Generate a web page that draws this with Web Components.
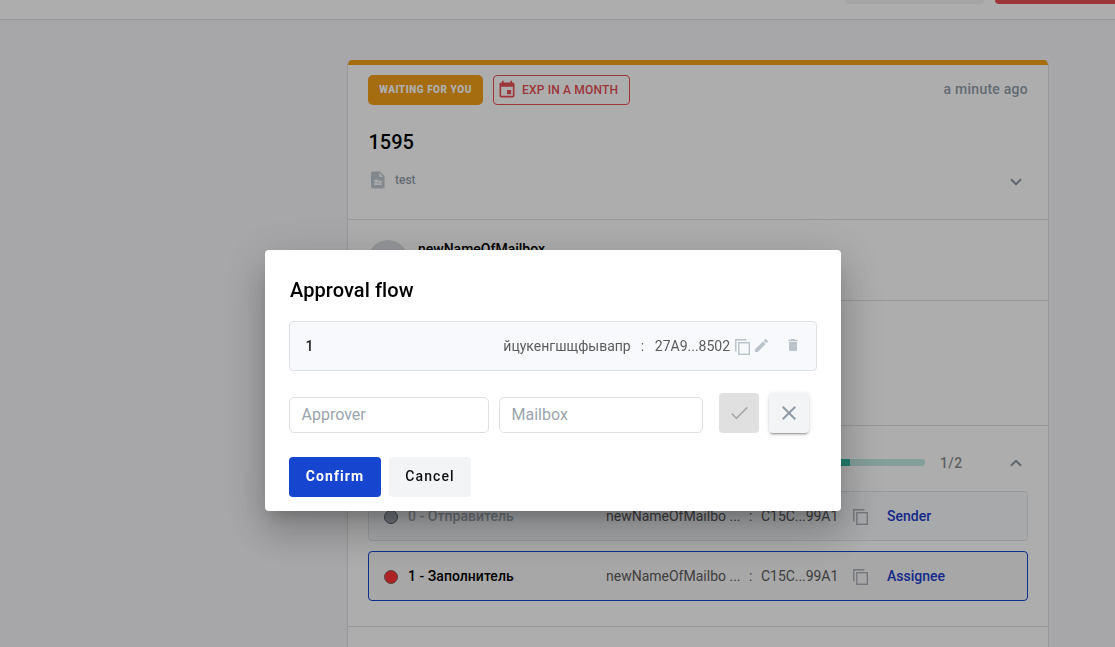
<!DOCTYPE html>
<html lang="en">
<head>
<meta charset="utf-8">
<title>Approval flow</title>
<style>
html,body{margin:0;height:100%;overflow:hidden;background:#f7f7fa}
body{font-family:Roboto,"Open Sans",sans-serif;font-size:14px;color:#000}
</style>
</head>
<body>
<mail-page></mail-page>
<script>
function define(name, html) {
  const t = document.createElement('template');
  t.innerHTML = html;
  customElements.define(name, class extends HTMLElement {
    constructor() {
      super();
      this.attachShadow({ mode: 'open' }).append(t.content.cloneNode(true));
    }
  });
}

const ICONS = {
  copy: [15, 16, '<path d="M.75 12.5V.75H11.5" fill="none" stroke="currentColor" stroke-width="1.4"/><rect x="3.8" y="3.7" width="10.5" height="11.6" fill="none" stroke="currentColor" stroke-width="1.4"/>'],
  edit: [24, 24, '<path fill="currentColor" d="M3 17.25V21h3.75L17.81 9.94l-3.75-3.75L3 17.25zM20.71 7.04a1 1 0 0 0 0-1.41l-2.34-2.34a1 1 0 0 0-1.41 0l-1.83 1.83 3.75 3.75 1.83-1.83z"/>'],
  trash: [24, 24, '<path fill="currentColor" d="M6 19c0 1.1.9 2 2 2h8c1.1 0 2-.9 2-2V7H6v12zM19 4h-3.5l-1-1h-5l-1 1H5v2h14V4z"/>'],
  check: [24, 24, '<path fill="currentColor" d="M9.400 16.170 5.200 12l-1.100 1.100L9.400 18.400 20.900 6.900l-1.100-1.100z"/>'],
  close: [24, 24, '<path fill="currentColor" d="M19 6.41 17.59 5 12 10.59 6.41 5 5 6.41 10.59 12 5 17.59 6.41 19 12 13.41 17.59 19 19 17.59 13.41 12z"/>'],
  event: [24, 24, '<path fill="currentColor" d="M17 12h-5v5h5v-5zM16 1v2H8V1H6v2H5c-1.11 0-1.99.9-1.99 2L3 19a2 2 0 0 0 2 2h14c1.1 0 2-.9 2-2V5c0-1.1-.9-2-2-2h-1V1h-2zm3 18H5V8h14v11z"/>'],
  down: [12, 8, '<path d="M.9 1.2 6 6.2l5.1-5" fill="none" stroke="currentColor" stroke-width="2"/>'],
  up: [12, 8, '<path d="M.9 6.8 6 1.8l5.1 5" fill="none" stroke="currentColor" stroke-width="2"/>'],
  file: [14, 18, '<path fill="currentColor" fill-rule="evenodd" d="M1.7.5H9L13.6 5v10.800c0 1-.7 1.700-1.700 1.700H1.700C.7 17.500 0 16.800 0 15.800V2.200C0 1.200.7.500 1.700.500zM8.300 1.800v4h4zM3.400 8.700v5.200h7.200V9.500H6.800v-.8z"/><path d="M6.900 9.500v4.400M3.500 11.500h3M7.500 11h2.500M7.500 12.600h2.500" stroke="currentColor" stroke-width=".5"/>']
};
customElements.define('ui-icon', class extends HTMLElement {
  connectedCallback() {
    if (this.shadowRoot) return;
    const [w, h, body] = ICONS[this.getAttribute('name')];
    const s = this.getAttribute('size') || w;
    this.attachShadow({ mode: 'open' }).innerHTML =
      `<style>:host{display:inline-flex;flex:none}svg{display:block}</style><svg width="${s}" height="${s * h / w}" viewBox="0 0 ${w} ${h}">${body}</svg>`;
  }
});

define('app-header', `<style>
:host{display:flex;box-sizing:border-box;height:20px;background:#fff;border-bottom:1px solid #dfe0e2;align-items:flex-start;padding-left:845px;gap:11px;overflow:hidden}
i{height:4px;border-radius:0 0 4px 4px;flex:none;width:139px;background:#f3f3f4}
.r{width:140px;background:#e65054}
</style><i></i><i class="r"></i>`);

define('status-chip', `<style>
:host{display:flex;box-sizing:border-box;width:115px;height:30px;padding-bottom:1px;border-radius:5px;background:#f49f19;color:#fff;align-items:center;justify-content:center;font-weight:900;font-size:10px;letter-spacing:.52px;white-space:nowrap}
:host([outline]){width:137px;background:none;border:1px solid #e65054;border-radius:4px;color:#e65054;font-weight:500;font-size:12px;letter-spacing:.17px;justify-content:flex-start;padding:0 0 0 3px;gap:5px}
</style><slot></slot>`);

define('card-section', `<style>
:host{display:block;box-sizing:border-box;border-bottom:1px solid #dfe0e2;padding:0 20px}
</style><slot></slot>`);

define('participant-row', `<style>
:host{box-sizing:border-box;height:50px;display:grid;grid-template-columns:16px 206px 136px 19px 85px 41px 1fr;align-items:center;padding:0 0 0 15px;border:1px solid #dfe2e5;border-radius:4px;background:#f7f9fc;font-size:14px;white-space:nowrap;color:#5c5c5c}
:host([active]){background:#f7f7f7;border-color:#1646cf}
i{border-radius:50%;background:#a5abb3;border:1px solid #5c6068;width:12px;height:12px;margin-top:1px}
:host([active]) i{background:#ff3434;border-color:#80656a}
.n{padding-left:8px;font-weight:500;color:#a1a8af;letter-spacing:.03px}
:host([active]) .n{color:#000}
.c{padding-left:7px}
.h{letter-spacing:-.05px}
ui-icon{color:#acb2b8;margin:1px 0 0 7px}
.r{color:#1c3ccc;font-weight:500}
</style><i></i><span class="n"><slot name="step"></slot></span><span><slot name="box"></slot></span><span class="c">:</span><span class="h"><slot name="hash"></slot></span><ui-icon name="copy"></ui-icon><span class="r"><slot></slot></span>`);

define('document-card', `<style>
:host{display:block;box-sizing:border-box;width:702px;height:640px;margin:40px 0 0 347px;background:#fff;border:1px solid #dfe0e2;border-top:0;border-radius:5px 5px 0 0;overflow:hidden}
.bar{height:5px;background:#f49f19}
.top{display:flex;gap:10px;padding-top:10px}
.ago{margin-left:auto;padding-top:6px;color:#959ea8;font-weight:500;font-size:14px;letter-spacing:.25px;line-height:16px}
h1{margin:25px 0 0 .5px;font-size:20px;line-height:24px;font-weight:500;letter-spacing:0}
.file{display:flex;align-items:center;margin-top:16px;height:20px;padding:0 6px 0 3px;color:#959ea8;font-size:12px;font-weight:500}
.file span{margin-left:10px}
.file ui-icon:first-child{color:#c1c9cf;margin-top:0}
.chev{margin-left:auto;margin-top:3px;color:#8f98a2}
.who{display:flex;padding-top:20px;gap:10px;font-weight:500;line-height:18px}
.av{width:40px;height:40px;border-radius:50%;background:#dadde1}
.prog{display:flex;align-items:center;height:65px;padding-top:9px;box-sizing:border-box}
.track{margin:-2px 0 0 397px;width:160px;height:7px;border-radius:3px;overflow:hidden;background:#c0eae3}
.track i{display:block;width:85px;height:7px;background:#34bca4}
.prog span{margin-left:15px;color:#909090;font-weight:500;letter-spacing:.4px;font-size:14px}
.prog ui-icon{margin:0 6px 0 auto;color:#8f98a2}
.rows{display:grid;gap:10px}
</style>
<div class="bar"></div>
<card-section style="height:155px">
 <div class="top"><status-chip>WAITING FOR YOU</status-chip><status-chip outline><ui-icon name="event" size="20"></ui-icon><span>EXP IN A MONTH</span></status-chip><span class="ago">a minute ago</span></div>
 <h1>1595</h1>
 <div class="file"><ui-icon name="file"></ui-icon><span>test</span><ui-icon class="chev" name="down"></ui-icon></div>
</card-section>
<card-section style="height:81px"><div class="who"><div class="av"></div>newNameOfMailbox</div></card-section>
<card-section style="height:125px"></card-section>
<card-section style="height:201px">
 <div class="prog"><div class="track"><i></i></div><span>1/2</span><ui-icon name="up"></ui-icon></div>
 <div class="rows">
 <participant-row><span slot="step">0 - Отправитель</span><span slot="box">newNameOfMailbo ...</span><span slot="hash">C15C...99A1</span>Sender</participant-row>
 <participant-row active><span slot="step">1 - Заполнитель</span><span slot="box">newNameOfMailbo ...</span><span slot="hash">C15C...99A1</span>Assignee</participant-row>
 </div>
</card-section>`);

define('text-field', `<style>
:host{display:flex;align-items:center;box-sizing:border-box;height:36px;border:1px solid #dfe0e2;border-radius:5px;padding:0 11.5px 2px;font-size:16px;color:#9ba4ae;background:#fff}
</style><slot></slot>`);

define('ui-button', `<style>
:host{display:flex;align-items:center;justify-content:center;box-sizing:border-box;height:40px;border-radius:4px;background:#f3f4f6;color:#111;font-weight:500;font-size:14px;letter-spacing:1.1px}
:host([primary]){background:#1646cf;color:#fff;font-weight:700}
:host([disabled]){background:#e0e0e0;color:#a8a8a8}
:host([raised]){color:#8f9ba6;box-shadow:0 3px 1px -2px rgba(0,0,0,.2),0 2px 2px rgba(0,0,0,.14),0 1px 5px rgba(0,0,0,.12)}
</style><slot></slot>`);

define('approval-dialog', `<style>
:host{display:block;box-sizing:border-box;width:576px;height:261px;padding:28px 24px 0;background:#fff;border-radius:4px;box-shadow:0 11px 15px -7px rgba(0,0,0,.2),0 24px 38px 3px rgba(0,0,0,.14),0 9px 46px 8px rgba(0,0,0,.12)}
h2{margin:0 0 0 1px;font-size:20px;line-height:24px;font-weight:500;letter-spacing:.08px}
.row{display:flex;align-items:center;box-sizing:border-box;height:50px;margin-top:19px;padding:0 15.5px;border:1px solid #dfe2e5;border-radius:4px;background:#f7f9fc;color:#5c5c5c;white-space:nowrap}
.row b{font-weight:500;color:#222;width:198.5px}
.nm{width:138px}.c{width:14px}.h{width:80px}
ui-icon{color:#bac2ca}
ui-button ui-icon{color:inherit}
.form{display:flex;align-items:center;margin-top:22px;height:44px}
.act{display:flex;gap:8px;margin-top:20px}
.act ui-button{padding-bottom:2px}
</style>
<h2>Approval flow</h2>
<div class="row"><b>1</b><span class="nm">йцукенгшщфывапр</span><span class="c">:</span><span class="h">27A9...8502</span><ui-icon name="copy" style="margin-top:2px"></ui-icon><ui-icon name="edit" size="17" style="margin:-2px 0 0 3px"></ui-icon><ui-icon name="trash" size="16" style="margin:-2px 0 0 15px"></ui-icon></div>
<div class="form"><text-field style="width:200px">Approver</text-field><text-field style="width:204px;margin-left:10px">Mailbox</text-field><ui-button disabled style="width:40px;margin:-4px 0 0 16px"><ui-icon name="check" size="24"></ui-icon></ui-button><ui-button raised style="width:40px;margin:-4px 0 0 10px"><ui-icon name="close" size="24"></ui-icon></ui-button></div>
<div class="act"><ui-button primary style="width:92px">Confirm</ui-button><ui-button style="width:82px">Cancel</ui-button></div>`);

define('mail-page', `<style>
:host{display:block;height:100%;overflow:hidden}
.scrim{position:fixed;inset:0;background:rgba(0,0,0,.32)}
approval-dialog{position:fixed;left:265px;top:250px}
</style><app-header></app-header><document-card></document-card><div class="scrim"></div><approval-dialog></approval-dialog>`);
</script>
</body>
</html>
